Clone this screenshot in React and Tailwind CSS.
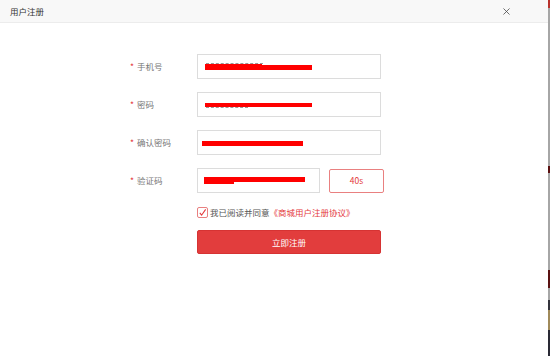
import { X } from "lucide-react";

const font = { fontFamily: '"Noto Sans CJK SC", "Noto Sans", sans-serif' };

function Field({ label, children }) {
  return (
    <div className="flex items-center h-[25px]">
      <div className="w-[67px] flex items-center text-[8.5px] text-[#777]">
        <span className="text-[#e4393c] w-[7px]">*</span>
        <span>{label}</span>
      </div>
      {children}
    </div>
  );
}

function Redacted({ width, bars, ghost }) {
  return (
    <div className={`relative h-[25px] border border-[#dcdcdc] bg-white ${width}`}>
      {ghost}
      {bars}
    </div>
  );
}

export default function App() {
  return (
    <div className="w-[550px] h-[356px] flex bg-white" style={font}>
      <div className="w-[548px] h-full bg-white flex flex-col">
        <div className="h-[23px] bg-[#f8f8f8] border-b border-[#ececec] flex items-center justify-between pl-[10px] pr-[36px]">
          <span className="text-[8.5px] text-[#333]">用户注册</span>
          <X size={11} strokeWidth={1.7} className="text-[#444]" />
        </div>

        <div className="pl-[130px] pt-[31px] flex flex-col gap-[13px]">
          <Field label="手机号">
            <Redacted
              width="w-[184px]"
              ghost={<div className="absolute left-[8px] top-[8px] w-[57px] h-[1px] border-t border-dashed border-[#999]" />}
              bars={
                <>
                  <div className="absolute left-[7px] top-[9px] w-[57px] h-[6px] bg-[#ff0000]" />
                  <div className="absolute left-[7px] top-[10px] w-[107px] h-[5px] bg-[#ff0000]" />
                </>
              }
            />
          </Field>
          <Field label="密码">
            <Redacted
              width="w-[184px]"
              ghost={<div className="absolute left-[8px] top-[14px] w-[42px] h-[1px] border-t border-dashed border-[#999]" />}
              bars={
                <>
                  <div className="absolute left-[7px] top-[10px] w-[107px] h-[4px] bg-[#ff0000]" />
                  <div className="absolute left-[7px] top-[11px] w-[42px] h-[3px] bg-[#ff0000]" />
                </>
              }
            />
          </Field>
          <Field label="确认密码">
            <Redacted
              width="w-[184px]"
              bars={<div className="absolute left-[4px] top-[10px] w-[101px] h-[5px] bg-[#ff0000]" />}
            />
          </Field>
          <Field label="验证码">
            <div className="flex items-center gap-[9px]">
              <Redacted
                width="w-[123px]"
                bars={
                  <>
                    <div className="absolute left-[6px] top-[8px] w-[101px] h-[5px] bg-[#ff0000]" />
                    <div className="absolute left-[6px] top-[10px] w-[30px] h-[5px] bg-[#ff0000]" />
                  </>
                }
              />
              <button className="w-[55px] h-[24px] border border-[#e98080] rounded-[2px] text-[8.5px] text-[#e4393c] bg-white">
                40s
              </button>
            </div>
          </Field>

          <div className="pl-[67px] flex flex-col gap-[12px]">
            <div className="flex items-center h-[12px] text-[8.5px]">
              <span className="w-[11px] h-[11px] border border-[#e98080] rounded-[2px] flex items-center justify-center mr-[2px]">
                <svg width="9" height="9" viewBox="0 0 10 10">
                  <path d="M2 5.5 L4 8 L8.5 1.5" fill="none" stroke="#e4393c" strokeWidth="1.2" />
                </svg>
              </span>
              <span className="text-[#555]">我已阅读并同意</span>
              <span className="text-[#e4393c]">《商城用户注册协议》</span>
            </div>
            <button className="w-[184px] h-[24px] bg-[#e23d3d] border border-[#d63333] rounded-[2px] text-white text-[8.5px]">
              立即注册
            </button>
          </div>
        </div>
      </div>

      <div className="w-[2px] h-full flex flex-col">
        <div className="h-[8px] bg-[#b8322c]" />
        <div className="h-[158px] bg-[#a6a6a6]" />
        <div className="h-[7px] bg-[#5a1010]" />
        <div className="h-[97px] bg-[#a6a6a6]" />
        <div className="h-[18px] bg-[#5a1212]" />
        <div className="h-[12px] bg-[#a6a6a6]" />
        <div className="h-[10px] bg-[#34343c]" />
        <div className="h-[20px] bg-[#a08a5a]" />
        <div className="flex-1 bg-[#2a2a35]" />
      </div>
    </div>
  );
}
